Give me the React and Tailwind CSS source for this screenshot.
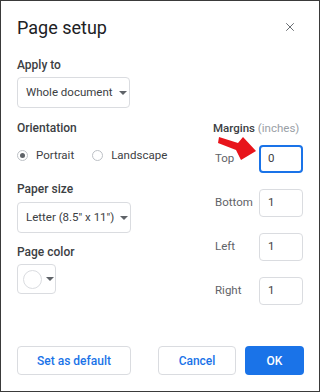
import { X } from 'lucide-react';

const font = { fontFamily: 'Roboto, "Liberation Sans", sans-serif' };

function Caret() {
  return (
    <svg width="8" height="4" viewBox="0 0 8 4" className="shrink-0">
      <path d="M0 0 L8 0 L4 4 Z" fill="#5f6368" />
    </svg>
  );
}

function Select({ label, width }) {
  return (
    <div className={`flex items-center gap-[6px] h-[31px] ${width} rounded border border-[#dadce0] pl-[8px] text-[11.5px] text-[#3c4043] whitespace-nowrap`}>
      <span>{label}</span>
      <Caret />
    </div>
  );
}

function Radio({ checked, label }) {
  return (
    <div className="flex items-center gap-[8px]">
      <span className="w-[11px] h-[11px] rounded-full border border-[#bdc1c6] flex items-center justify-center">
        {checked && <span className="w-[5px] h-[5px] rounded-full bg-[#5f6368]" />}
      </span>
      <span className="text-[11.5px] text-[#3c4043]">{label}</span>
    </div>
  );
}

function MarginRow({ label, value, active }) {
  return (
    <div className="flex items-center">
      <span className="w-[44px] text-[11.5px] text-[#5f6368]">{label}</span>
      <div
        className={`w-[44px] h-[28px] rounded flex items-center text-[11.5px] text-[#3c4043] ${
          active ? 'border-2 border-[#1a73e8] pl-[7px]' : 'border border-[#dadce0] pl-[8px]'
        }`}
      >
        {value}
      </div>
    </div>
  );
}

export default function App() {
  return (
    <div className="w-[320px] h-[392px] bg-white border border-[#3a3a3a] relative overflow-hidden" style={font}>
      {/* Header */}
      <div className="flex items-start justify-between pl-[16px] pr-[22px] pt-[15px]">
        <h1 className="text-[18px] text-[#202124] leading-[24px]">Page setup</h1>
        <X className="w-[14px] h-[14px] text-[#5f6368] mt-[4px]" strokeWidth={1.6} />
      </div>

      <div className="pl-[16px] pt-[17px]">
        <p className="text-[12px] font-medium text-[#3c4043] leading-[16px]">Apply to</p>
        <div className="mt-[4px]">
          <Select label="Whole document" width="w-[113px]" />
        </div>
      </div>

      <div className="flex pl-[16px] pt-[12px]">
        {/* Left column */}
        <div className="w-[196px]">
          <p className="text-[12px] font-medium text-[#3c4043] leading-[16px]">Orientation</p>
          <div className="flex items-center gap-[18px] mt-[11px]">
            <Radio checked label="Portrait" />
            <Radio label="Landscape" />
          </div>

          <p className="mt-[17px] text-[12px] font-medium text-[#3c4043] leading-[16px]">Paper size</p>
          <div className="mt-[5px]">
            <Select label={'Letter (8.5" x 11")'} width="w-[114px]" />
          </div>

          <p className="mt-[11px] text-[12px] font-medium text-[#3c4043] leading-[16px]">Page color</p>
          <div className="mt-[4px] w-[39px] h-[30px] rounded border border-[#dadce0] flex items-center pl-[5px] gap-[4px]">
            <span className="w-[19px] h-[19px] rounded-full border border-[#dadce0] bg-white" />
            <Caret />
          </div>
        </div>

        {/* Right column */}
        <div>
          <p className="text-[11.5px] leading-[16px] whitespace-nowrap">
            <span className="font-medium text-[#3c4043]">Margins</span>{' '}
            <span className="text-[#9aa0a6]">(inches)</span>
          </p>
          <div className="flex flex-col gap-[16px] mt-[9px] pl-[2px]">
            <MarginRow label="Top" value="0" active />
            <MarginRow label="Bottom" value="1" />
            <MarginRow label="Left" value="1" />
            <MarginRow label="Right" value="1" />
          </div>
        </div>
      </div>

      {/* Footer buttons */}
      <div className="absolute left-[16px] right-[15px] top-[345px] flex items-center">
        <button className="w-[114px] h-[29px] rounded border border-[#dadce0] text-[12px] font-medium text-[#1a73e8]">
          Set as default
        </button>
        <div className="ml-auto flex gap-[9px]">
          <button className="w-[78px] h-[29px] rounded border border-[#dadce0] text-[12px] font-medium text-[#1a73e8]">
            Cancel
          </button>
          <button className="w-[59px] h-[29px] rounded bg-[#1a73e8] text-[12px] font-medium text-white">
            OK
          </button>
        </div>
      </div>

      {/* Red arrow annotation */}
      <svg className="absolute left-[214px] top-[132px]" width="44" height="30" viewBox="0 0 44 30">
        <path d="M4 4 L23 10 L28 4 L41 18 L26 27 L21 17 L3 10 Z" fill="#e8141b" />
      </svg>
    </div>
  );
}
